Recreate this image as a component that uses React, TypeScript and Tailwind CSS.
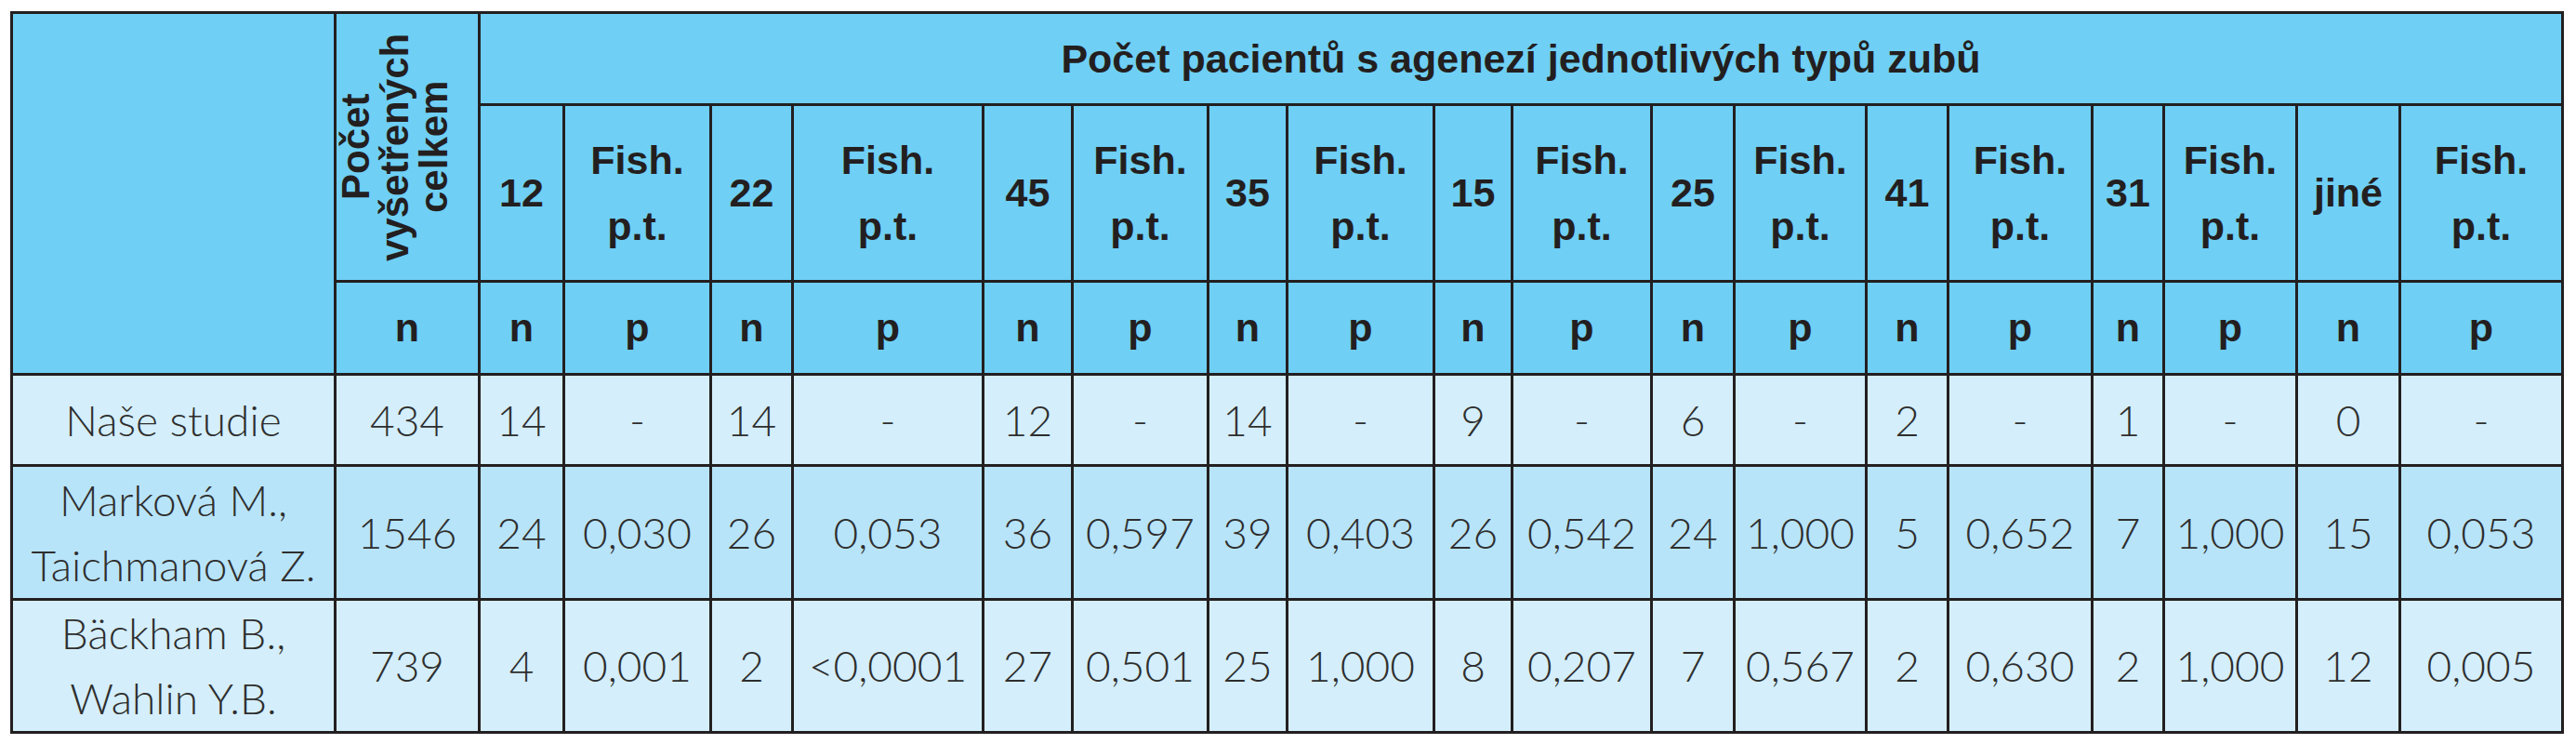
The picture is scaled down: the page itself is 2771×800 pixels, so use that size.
const colWidths = [
  'w-[348px]', 'w-[155px]', 'w-[91px]', 'w-[158px]', 'w-[88px]', 'w-[205px]', 'w-[96px]',
  'w-[146px]', 'w-[85px]', 'w-[158px]', 'w-[84px]', 'w-[150px]', 'w-[89px]', 'w-[142px]',
  'w-[88px]', 'w-[155px]', 'w-[77px]', 'w-[143px]', 'w-[111px]', 'w-[175px]',
]

const teeth = ['12', '22', '45', '35', '15', '25', '41', '31', 'jiné']

const rows = [
  {
    name: ['Naše studie'],
    total: '434',
    values: ['14', '-', '14', '-', '12', '-', '14', '-', '9', '-', '6', '-', '2', '-', '1', '-', '0', '-'],
    bg: 'bg-[#d4eefb]',
    h: 'h-[98px]',
  },
  {
    name: ['Marková M.,', 'Taichmanová Z.'],
    total: '1546',
    values: ['24', '0,030', '26', '0,053', '36', '0,597', '39', '0,403', '26', '0,542', '24', '1,000', '5', '0,652', '7', '1,000', '15', '0,053'],
    bg: 'bg-[#b8e4f9]',
    h: 'h-[144px]',
  },
  {
    name: ['Bäckham B.,', 'Wahlin Y.B.'],
    total: '739',
    values: ['4', '0,001', '2', '<0,0001', '27', '0,501', '25', '1,000', '8', '0,207', '7', '0,567', '2', '0,630', '2', '1,000', '12', '0,005'],
    bg: 'bg-[#d4eefb]',
    h: 'h-[143px]',
  },
]

const th = 'border-[3px] border-[#231f20] p-0 text-center align-middle font-bold'
const td = 'border-[3px] border-[#231f20] p-0 text-center align-middle font-light'

export default function App() {
  return (
    <div className="min-h-[800px] w-[2771px] bg-white pl-[11px] pt-[12px]">
      <table className="table-fixed border-collapse text-[#231f20]">
        <colgroup>
          {colWidths.map((w, i) => (
            <col key={i} className={w} />
          ))}
        </colgroup>
        <thead className="bg-[#6fcff5] font-['Liberation_Sans',Arial,sans-serif] text-[43px] leading-[71px]">
          <tr className="h-[99px]">
            <th rowSpan={3} className={th}></th>
            <th rowSpan={2} className={th}>
              <div className="mx-auto flex h-[280px] rotate-180 items-center justify-center text-center text-[42px] leading-[42px] [writing-mode:vertical-rl]">
                Počet vyšetřených celkem
              </div>
            </th>
            <th colSpan={18} className={th}>
              Počet pacientů s agenezí jednotlivých typů zubů
            </th>
          </tr>
          <tr className="h-[190px]">
            {teeth.map((t) => [
              <th key={t} className={th}>{t}</th>,
              <th key={t + 'f'} className={th}>
                Fish.
                <br />
                p.t.
              </th>,
            ])}
          </tr>
          <tr className="h-[100px]">
            <th className={th}>n</th>
            {teeth.map((t) => [
              <th key={t} className={th}>n</th>,
              <th key={t + 'p'} className={th}>p</th>,
            ])}
          </tr>
        </thead>
        <tbody className="font-['Lato','Liberation_Sans',sans-serif] text-[46px] leading-[70px] text-[#2e2e2e]">
          {rows.map((r) => (
            <tr key={r.total} className={`${r.h} ${r.bg}`}>
              <td className={td}>
                {r.name.map((n) => (
                  <div key={n}>{n}</div>
                ))}
              </td>
              <td className={td}>{r.total}</td>
              {r.values.map((v, i) => (
                <td key={i} className={td}>{v}</td>
              ))}
            </tr>
          ))}
        </tbody>
      </table>
    </div>
  )
}
